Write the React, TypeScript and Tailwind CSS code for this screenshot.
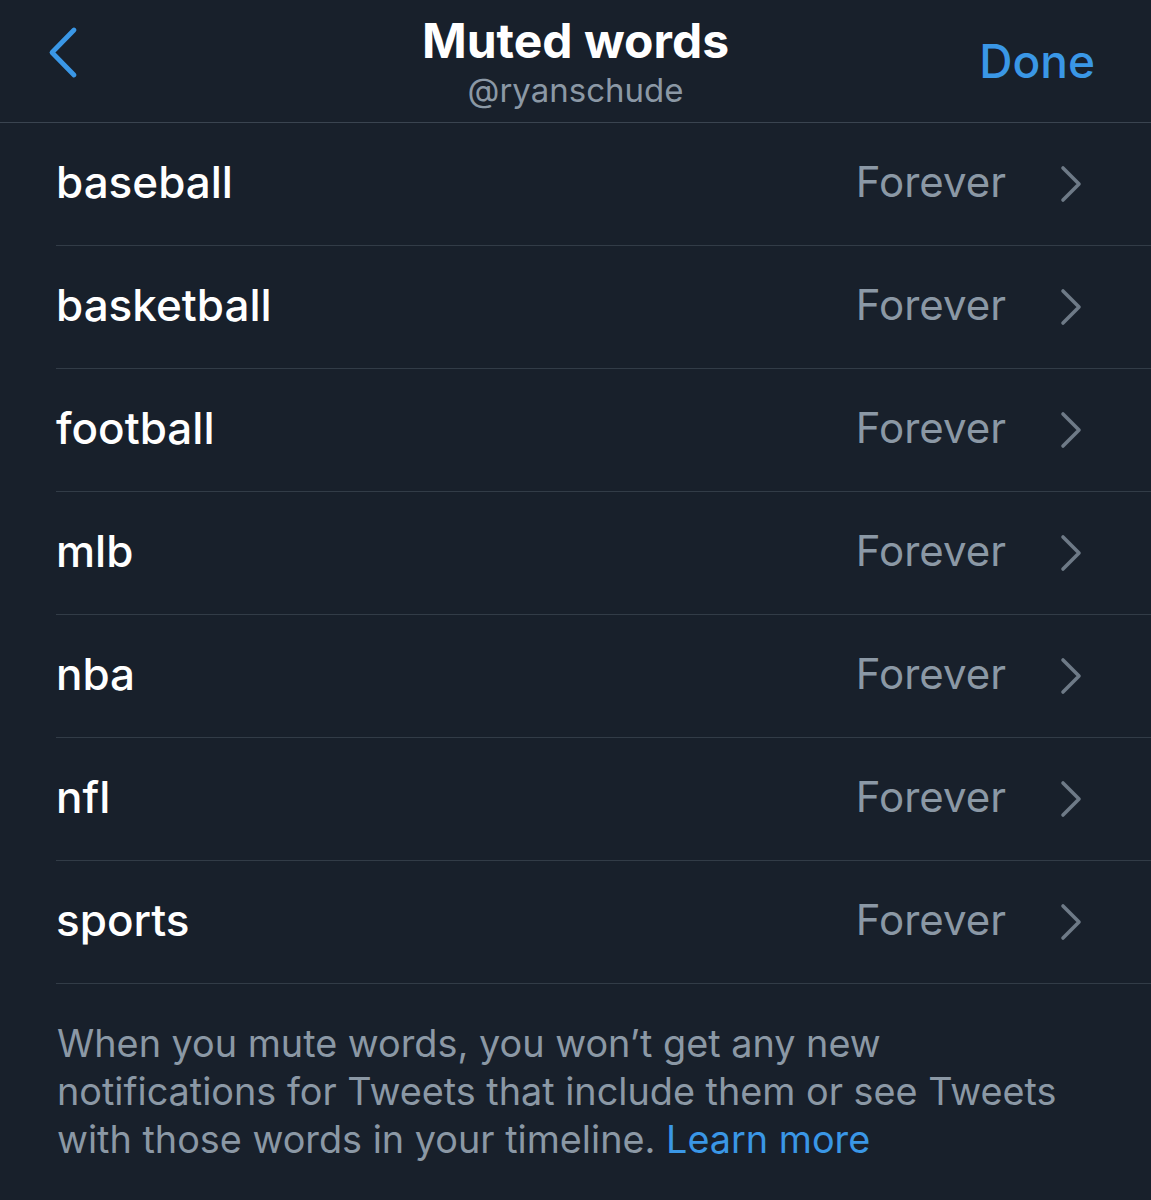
const WORDS = ["baseball", "basketball", "football", "mlb", "nba", "nfl", "sports"];

function BackChevron() {
  return (
    <svg width="34" height="54" viewBox="0 0 34 54" fill="none" className="mt-[-16px] text-[#3a97e6]">
      <path d="M27 4 L5 26.5 L27 49" stroke="currentColor" strokeWidth="4.8" strokeLinecap="round" strokeLinejoin="round" />
    </svg>
  );
}

function RowChevron() {
  return (
    <svg width="26" height="40" viewBox="0 0 26 40" fill="none" className="ml-[52px] mt-[4px] text-[#6e7a87]">
      <path d="M5 4 L21 20 L5 36" stroke="currentColor" strokeWidth="3.6" strokeLinecap="round" strokeLinejoin="round" />
    </svg>
  );
}

export default function App() {
  return (
    <div
      className="min-h-[1200px] w-full bg-[#18202b] text-white"
      style={{ fontFamily: "Inter, 'Liberation Sans', sans-serif" }}
    >
      {/* Header */}
      <header className="relative flex h-[123px] items-center justify-between border-b border-[#3a4450] pl-[47px] pr-[56px]">
        <BackChevron />
        <div className="absolute left-1/2 top-[13px] flex -translate-x-1/2 flex-col items-center">
          <h1 className="text-[48px] font-bold leading-[56px]">Muted words</h1>
          <p className="text-[33px] leading-[42px] text-[#8b98a5]">@ryanschude</p>
        </div>
        <button className="text-[46px] font-medium leading-none text-[#3a97e6]">Done</button>
      </header>

      {/* Rows */}
      <ul className="pl-[56px]">
        {WORDS.map((w) => (
          <li key={w} className="flex h-[123px] items-center border-b border-[#323c47] pb-[5px] pr-[67px]">
            <span className="flex-1 text-[44px] font-medium">{w}</span>
            <span className="text-[42px] text-[#8b98a5]">Forever</span>
            <RowChevron />
          </li>
        ))}
      </ul>

      {/* Footer */}
      <p className="px-[57px] pt-[35px] text-[37.8px] leading-[48px] text-[#8b98a5]">
        When you mute words, you won’t get any new
        <br />
        notifications for Tweets that include them or see Tweets
        <br />
        with those words in your timeline. <span className="text-[#3a97e6]">Learn more</span>
      </p>
    </div>
  );
}
